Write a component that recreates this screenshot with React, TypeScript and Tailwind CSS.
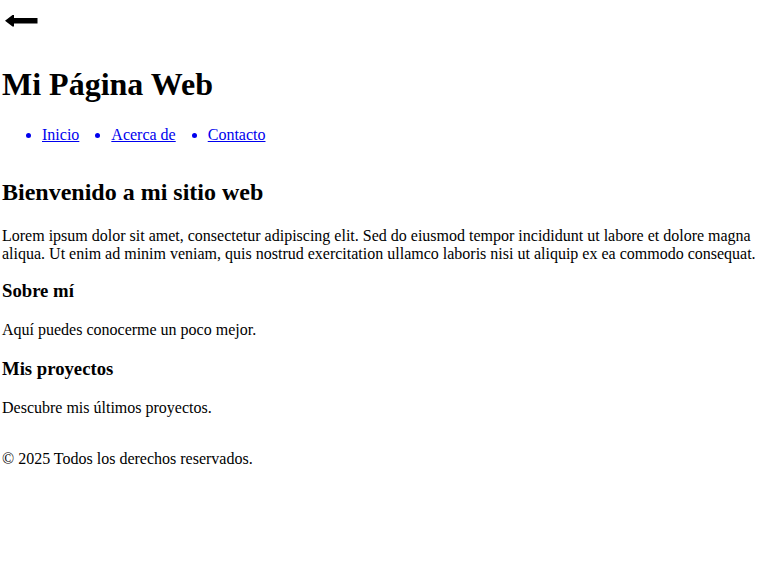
export default function App() {
  return (
    <div className="min-h-[581px] bg-white px-[2px] font-['Liberation_Serif',serif] text-[16px] leading-[normal] text-black">
      <header>
        <div className="h-[40px] -mx-[2px]">
          <svg width="40" height="40" viewBox="0 0 40 40" aria-label="Volver">
            <polygon
              points="5,20.7 12.5,15 14,15 14,18 37.5,18 37.5,23.4 14,23.4 14,26.4 12.5,26.4"
              fill="#000"
            />
          </svg>
        </div>
        <h1 className="mt-[26px] text-[32px] font-bold leading-[normal]">Mi Página Web</h1>
        <nav className="mt-[23px]">
          <ul className="flex list-disc gap-8 pl-[40px] text-[#0000ee]">
            <li>
              <a href="#" className="underline">Inicio</a>
            </li>
            <li>
              <a href="#" className="underline">Acerca de</a>
            </li>
            <li>
              <a href="#" className="underline">Contacto</a>
            </li>
          </ul>
        </nav>
      </header>

      <main className="mt-[34.5px]">
        <section>
          <h2 className="text-[24px] font-bold leading-[normal]">Bienvenido a mi sitio web</h2>
          <p className="mt-[21px]">
            Lorem ipsum dolor sit amet, consectetur adipiscing elit. Sed do eiusmod tempor incididunt ut labore et dolore magna aliqua. Ut enim ad minim veniam, quis nostrud exercitation ullamco laboris nisi ut aliquip ex ea commodo consequat.
          </p>
        </section>
        <section className="mt-[17px]">
          <h3 className="text-[18.72px] font-bold leading-[normal]">Sobre mí</h3>
          <p className="mt-[19.72px]">Aquí puedes conocerme un poco mejor.</p>
        </section>
        <section className="mt-[18.72px]">
          <h3 className="text-[18.72px] font-bold leading-[normal]">Mis proyectos</h3>
          <p className="mt-[18.72px]">Descubre mis últimos proyectos.</p>
        </section>
      </main>

      <footer className="mt-[33.5px]">
        <p>© 2025 Todos los derechos reservados.</p>
      </footer>
    </div>
  );
}
